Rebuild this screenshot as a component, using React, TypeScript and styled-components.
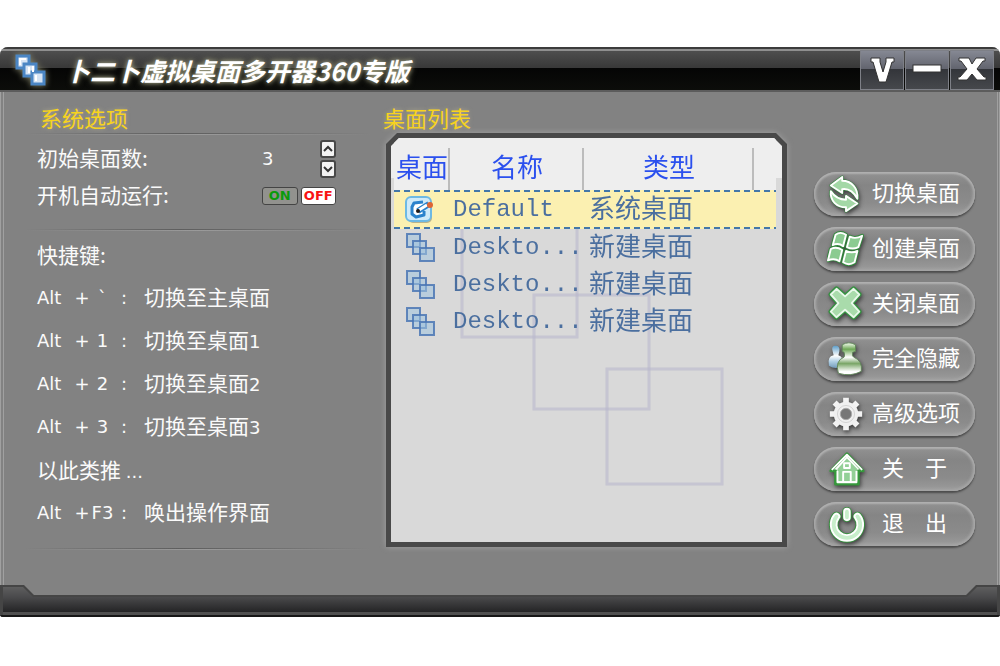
import React, { useState } from "react";
import styled, { createGlobalStyle, css } from "styled-components";

const cjk = `"Noto Sans CJK SC", sans-serif`;
const latin = `"DejaVu Sans", "Noto Sans CJK SC", sans-serif`;

const GlobalStyle = createGlobalStyle`
  * { box-sizing: border-box; }
  body { margin: 0; background: #fff; font-family: ${cjk}; }
  button, input { font: inherit; color: inherit; margin: 0; }
`;

const Page = styled.div`
  padding: 47px 0;
`;

const Window = styled.main`
  display: flex;
  flex-direction: column;
  min-width: 960px;
  background: #828282;
  border-radius: 8px 8px 3px 3px;
  overflow: hidden;
`;

const TitleBar = styled.header`
  display: flex;
  align-items: center;
  height: 45px;
  padding: 3px 6px 0 15px;
  border-bottom: 2px solid #5c5c5c;
  background: linear-gradient(#3c3c3c 0 2px, #8f8f8f 2px 4px, #4e4e4e 4px, #383838 21px, #050505 21px, #0c0d0a 100%);
`;

const AppIcon = styled.svg`
  width: 34px;
  height: 36px;
  flex: none;
  filter: drop-shadow(0 0 3px #8d8d70);
`;

const Title = styled.h1`
  flex: 1;
  margin: 0;
  padding-left: 16px;
  font-size: 25px;
  line-height: 38px;
  font-weight: 700;
  font-style: italic;
  color: #fff;
  white-space: nowrap;
  text-shadow: 0 0 4px #a5a58a, 0 0 7px #77775c;
`;

const Controls = styled.div`
  display: flex;
  gap: 1px;
`;

const ControlButton = styled.button`
  width: 44px;
  height: 40px;
  padding: 0;
  border: 1px solid #7e8087;
  background: linear-gradient(#858893, #62646e 18px, #33353a 18px, #46484c);
  svg { display: block; width: 42px; height: 38px; }
`;

const Body = styled.div`
  display: grid;
  grid-template-columns: 346px minmax(404px, 1fr) 161px;
  column-gap: 12px;
  padding: 13px 22px 35px 21px;
  border-left: 4px double #a0a0a0;
  border-right: 3px double #a0a0a0;
`;

const SectionTitle = styled.h2`
  margin: 0;
  padding-bottom: 4px;
  font-size: 22px;
  line-height: 24px;
  font-weight: 400;
  color: #f7d31e;
  text-shadow: 0 0 4px #aaa58c;
`;

const Options = styled.section`
  color: #fafafa;
  ${SectionTitle} { padding-left: 15px; }
`;

const Divider = styled.hr`
  height: 2px;
  margin: 0;
  border: 0;
  background:
    linear-gradient(90deg, transparent, #5e5e5e 45%, transparent) 0 0 / 100% 1px no-repeat,
    linear-gradient(90deg, transparent, #9a9a9a 50%, transparent) 0 1px / 100% 1px no-repeat;
`;

const Fields = styled.div`
  padding: 5px 35px 15px 12px;
`;

const Field = styled.div`
  display: flex;
  align-items: center;
  justify-content: space-between;
  height: 37px;
  font-size: 21px;
`;

const FieldLabel = styled.label`
  padding-bottom: 4px;
`;

const Stepper = styled.div`
  display: flex;
  justify-content: space-between;
  align-items: center;
  width: 74px;
`;

const CountInput = styled.input`
  width: 40px;
  padding: 0;
  border: 0;
  background: none;
  outline: none;
  font-family: ${latin};
  font-size: 18px;
`;

const Arrows = styled.div`
  display: grid;
  gap: 2px;
`;

const Arrow = styled.button`
  width: 16px;
  height: 18px;
  padding: 0;
  border: 2px solid #484848;
  border-radius: 3px;
  background: #f3f3f3;
  svg { display: block; width: 12px; height: 14px; }
`;

const Toggle = styled.div`
  display: flex;
  gap: 3px;
  width: 74px;
`;

const ToggleButton = styled.button<{ $on: boolean; $color: string }>`
  flex: 1;
  height: 18px;
  padding: 0;
  border: 1px solid #444;
  border-radius: 3px;
  background: ${(p) => (p.$on ? "#fff" : "#92928e")};
  color: ${(p) => p.$color};
  font-family: ${latin};
  font-size: 13px;
  line-height: 16px;
  font-weight: 700;
`;

const ShortcutTitle = styled.h3`
  margin: 0;
  padding: 4px 0 2px 12px;
  font-size: 21px;
  line-height: 39px;
  font-weight: 400;
`;

const Shortcuts = styled.ul`
  margin: 0;
  padding: 0 0 14px 12px;
  list-style: none;
`;

const Shortcut = styled.li`
  display: grid;
  grid-template-columns: 38px 14px 27px 16px auto;
  align-items: center;
  height: 43px;
  font-size: 21px;
  white-space: nowrap;
`;

const Target = styled.span`
  padding: 0 0 4px 12px;
`;

const Note = styled.li`
  height: 43px;
  font-size: 21px;
  line-height: 43px;
`;

const Latin = styled.span<{ $center?: boolean }>`
  font-family: ${latin};
  font-size: 18px;
  ${(p) => p.$center && css`
    display: flex;
    justify-content: center;
  `}
`;

const ListSection = styled.section`
  min-width: 0;
  margin-right: 15px;
`;

const Frame = styled.div`
  margin-left: 3px;
  filter: drop-shadow(0 0 3px #a2a2a2);
`;

const FrameEdge = styled.div`
  padding: 5px;
  background: #494949;
  clip-path: polygon(11px 0, calc(100% - 11px) 0, 100% 11px, 100% 100%, 0 100%, 0 11px);
`;

const ListBox = styled.div`
  position: relative;
  min-height: 404px;
  padding: 0 6px 0 3px;
  background: linear-gradient(#eee 40px, #d9d9d9 40px);
  clip-path: polygon(8px 0, calc(100% - 8px) 0, 100% 8px, 100% 100%, 0 100%, 0 8px);
`;

const Watermark = styled.svg`
  position: absolute;
  top: 82px;
  left: 69px;
  width: 266px;
  height: 268px;
`;

const Table = styled.table`
  position: relative;
  width: 100%;
  border-collapse: separate;
  border-spacing: 0;
  table-layout: fixed;
  color: #4b6f9f;
`;

const HeadCell = styled.th<{ $width?: number }>`
  width: ${(p) => (p.$width ? `${p.$width}px` : "auto")};
  height: 52px;
  padding: 3px 0 0;
  background: linear-gradient(#bcbcbc, #bcbcbc) right 10px / 2px 42px no-repeat #eee;
  color: #2b50ee;
  font-size: 26px;
  line-height: 36px;
  font-weight: 400;
`;

const HeadFill = styled.td`
  background: #eee;
`;

const Row = styled.tr<{ $selected: boolean }>`
  height: ${(p) => (p.$selected ? 39 : 37)}px;
  ${(p) =>
    p.$selected &&
    css`
      background:
        repeating-linear-gradient(90deg, #4377a9 0 6px, transparent 6px 10px) 0 0 / 100% 2px no-repeat,
        repeating-linear-gradient(90deg, #4377a9 0 6px, transparent 6px 10px) 0 100% / 100% 2px no-repeat,
        #fbf0b1;
    `}
`;

const IconCell = styled.td`
  padding: 0 0 0 10px;
  svg { display: block; width: 32px; height: 32px; }
`;

const NameCell = styled.td`
  padding: 0 0 0 3px;
  font-family: "Liberation Mono", monospace;
  font-size: 24px;
  line-height: 34px;
  white-space: nowrap;
`;

const TypeCell = styled.td`
  padding: 0 0 5px 5px;
  font-size: 26px;
  line-height: 32px;
  white-space: nowrap;
`;

const Actions = styled.nav`
  display: flex;
  flex-direction: column;
  gap: 11px;
  padding-top: 67px;
`;

const ActionLabel = styled.span<{ $spread?: boolean }>`
  display: flex;
  gap: 21px;
  padding: 0 0 6px ${(p) => (p.$spread ? 10 : 0)}px;
`;

const ActionButton = styled.button`
  display: flex;
  align-items: center;
  gap: 7px;
  height: 44px;
  padding: 0 0 0 13px;
  border: 0;
  border-radius: 22px;
  background: linear-gradient(#929292, #858585 30%, #8b8b8b 70%, #9c9c9c);
  box-shadow: inset 0 2px 2px #b0b0b0, inset 2px 0 3px #a5a5a5, inset -2px 0 3px #a5a5a5,
    inset 0 -2px 3px #a4a4a4, 0 2px 2px #4c4c4c;
  color: #fff;
  font-size: 22px;
  line-height: 36px;
  white-space: nowrap;
  svg { width: 38px; height: 38px; flex: none; filter: drop-shadow(1px 2px 2px #3c3c3c); }
`;

const Footer = styled.footer`
  height: 32px;
  background: #454545;
  border-bottom: 2px solid #161616;
  clip-path: polygon(0 0, 24px 0, 34px 10px, calc(100% - 34px) 10px, calc(100% - 24px) 0, 100% 0, 100% 100%, 0 100%);
  &::before {
    content: "";
    display: block;
    height: 30px;
    background: linear-gradient(#626262, #4a4a4c 12px, #242425 27px, #505050 27px);
    clip-path: polygon(3px 2px, 23px 2px, 33px 12px, calc(100% - 33px) 12px, calc(100% - 23px) 2px, calc(100% - 3px) 2px, calc(100% - 3px) 100%, 3px 100%);
  }
`;

const arrowPaths = [
  "M2 11 L14 2 V6 C24 6 31 14 30 25 C26 18 20 14 14 15 V19 Z",
  "M2 17 C6 23 11 26 18 26 V22 L30 30 L18 38 V34 C8 34 1 27 2 17 Z",
];

const panePaths = [
  "M9 5 Q14 1 20 5 L17 17 Q12 13 6 16 Z",
  "M24 7 Q30 10 37 6 L33 18 Q27 21 21 18 Z",
  "M4 20 Q10 17 16 21 L13 33 Q8 29 1 32 Z",
  "M20 22 Q26 25 32 22 L29 34 Q23 38 17 34 Z",
];

const crossPath = "M10 4 L19 12 L28 4 L34 10 L26 19 L34 28 L28 34 L19 26 L10 34 L4 28 L12 19 L4 10 Z";
const powerPath = "M9 12 A14 14 0 1 0 31 12 M20 7 V13";

const icons: Record<string, React.ReactNode> = {
  switch: (
    <g strokeLinejoin="round" transform="translate(2 0)">
      {arrowPaths.map((d) => (
        <g key={d}>
          <path d={d} fill="none" stroke="#33883d" strokeWidth="3" />
          <path d={d} fill="#a3d8a6" stroke="#fff" strokeWidth="2" />
        </g>
      ))}
    </g>
  ),
  create: (
    <g strokeLinejoin="round">
      {panePaths.map((d) => (
        <g key={d}>
          <path d={d} fill="none" stroke="#33883d" strokeWidth="4" />
          <path d={d} fill="#8bcb91" stroke="#fff" strokeWidth="2" />
        </g>
      ))}
    </g>
  ),
  close: (
    <g strokeLinejoin="round">
      <path d={crossPath} fill="none" stroke="#369141" strokeWidth="5" />
      <path d={crossPath} fill="#a9dbab" stroke="#e9f8ea" strokeWidth="2" />
    </g>
  ),
  hide: (
    <g>
      <path d="M2 27 Q0 17 7 16 L6 12 Q4 6 9 6 Q14 6 13 12 L12 16 Q18 18 17 27 Q9 32 2 27Z" fill="url(#pawnBlue)" />
      <path d="M12 35 Q8 22 18 18 Q19 16 18 13 L16 12 V5 Q23 1 30 5 V12 L27 13 Q26 17 28 18 Q38 22 36 33 Q25 39 12 35Z" fill="url(#pawnGreen)" stroke="#63885c" />
      <defs>
        <linearGradient id="pawnBlue" x2="0" y2="1"><stop offset="0" stopColor="#5d9dc8" /><stop offset=".45" stopColor="#fff" /><stop offset=".7" stopColor="#b1d0e5" /><stop offset="1" stopColor="#739bb9" /></linearGradient>
        <linearGradient id="pawnGreen" x2="0" y2="1"><stop offset="0" stopColor="#f7fff3" /><stop offset=".2" stopColor="#6ea856" /><stop offset=".45" stopColor="#fff" /><stop offset=".65" stopColor="#7aa667" /><stop offset=".9" stopColor="#fff" /></linearGradient>
      </defs>
    </g>
  ),
  settings: (
    <g>
      <g stroke="#f3f3f3" strokeWidth="6">
        {[0, 45, 90, 135].map((a) => <path key={a} d="M20 3 V10 M20 30 V37" transform={`rotate(${a} 20 20)`} />)}
      </g>
      <circle cx="20" cy="20" r="9" fill="none" stroke="#f0f0f0" strokeWidth="8" />
      <circle cx="20" cy="20" r="6" fill="#777" stroke="#aaa" />
      <circle cx="20" cy="20" r="9" fill="none" stroke="#d2d2d2" />
    </g>
  ),
  about: (
    <g strokeLinejoin="round" transform="translate(1 1)">
      <path d="M20 3 L37 21 H32 V35 H8 V21 H3 Z" fill="#fff" stroke="#36983c" strokeWidth="3" />
      <path d="M20 8 L31 19 V32 H10 V19 Z" fill="#93d097" />
      <path d="M4 20 L20 4 L36 20 M16 34 V22 H24 V34 M17 13 H23 V18 H17 Z M10 21 V33 H30 V21" fill="none" stroke="#fff" strokeWidth="2" />
    </g>
  ),
  exit: (
    <g fill="none" strokeLinecap="round" transform="translate(1 0)">
      <path d={powerPath} stroke="#38903f" strokeWidth="10" />
      <path d={powerPath} stroke="#fff" strokeWidth="8" />
      <path d={powerPath} stroke="#c8efcb" strokeWidth="4" />
    </g>
  ),
};

const actions: { icon: string; label: string; spread?: boolean }[] = [
  { icon: "switch", label: "切换桌面" },
  { icon: "create", label: "创建桌面" },
  { icon: "close", label: "关闭桌面" },
  { icon: "hide", label: "完全隐藏" },
  { icon: "settings", label: "高级选项" },
  { icon: "about", label: "关于", spread: true },
  { icon: "exit", label: "退出", spread: true },
];

const desktops = [
  { name: "Default", type: "系统桌面", system: true },
  { name: "Deskto...", type: "新建桌面", system: false },
  { name: "Deskto...", type: "新建桌面", system: false },
  { name: "Deskto...", type: "新建桌面", system: false },
];

const shortcuts = [
  { key: "`", target: "切换至主桌面", n: "" },
  { key: "1", target: "切换至桌面", n: "1" },
  { key: "2", target: "切换至桌面", n: "2" },
  { key: "3", target: "切换至桌面", n: "3" },
];

function SystemIcon() {
  return (
    <svg viewBox="0 0 32 32" aria-hidden="true">
      <rect x="4" y="5" width="24" height="24" rx="5" fill="#555" opacity=".4" />
      <rect x="2" y="3" width="25" height="24" rx="5" fill="#cfeaf9" stroke="#6db9e4" strokeWidth="2" />
      <path d="M19 8 L10 9 L8 13 V20 L12 23 L20 21 V17" fill="#fff" stroke="#2a82cc" strokeWidth="3" strokeLinejoin="round" />
      <path d="M14 17 L25 10" fill="none" stroke="#2a82cc" strokeWidth="6" />
      <path d="M15 16 L23 11" stroke="#fff" strokeWidth="3" />
      <circle cx="14" cy="17" r="2" fill="#211b18" />
      <circle cx="26" cy="11" r="3" fill="#dd6534" />
    </svg>
  );
}

function DesktopIcon() {
  return (
    <svg viewBox="0 0 32 32" aria-hidden="true">
      <g fill="#9ec2df" fillOpacity=".55" stroke="#4a76b4" strokeOpacity=".85" strokeWidth="2">
        <rect x="3" y="2" width="13" height="13" />
        <rect x="9" y="9" width="13" height="13" />
        <rect x="16" y="16" width="14" height="13" />
      </g>
    </svg>
  );
}

function ShortcutRow({ combo, target, n }: { combo: string; target: string; n?: string }) {
  return (
    <Shortcut>
      <Latin>Alt</Latin>
      <Latin $center>+</Latin>
      <Latin $center>{combo}</Latin>
      <Latin $center>:</Latin>
      <Target>{target}{n && <Latin>{n}</Latin>}</Target>
    </Shortcut>
  );
}

export default function App() {
  const [count, setCount] = useState(3);
  const [autoRun, setAutoRun] = useState(false);
  const [selected, setSelected] = useState(0);

  return (
    <Page>
      <GlobalStyle />
      <Window>
        <TitleBar>
          <AppIcon viewBox="0 0 34 36" aria-hidden="true">
            <g stroke="#4b86c4" strokeWidth="3" fill="#d5e3f3">
              <rect x="2" y="4" width="12" height="12" />
              <rect x="9" y="12" width="12" height="12" />
              <rect x="17" y="20" width="12" height="12" />
            </g>
            <path d="M5 13 V7 H11 M14 15 V21 M18 14 V20 M21 29 V23" stroke="#fff" strokeWidth="2" fill="none" />
          </AppIcon>
          <Title>卜二卜虚拟桌面多开器360专版</Title>
          <Controls>
            <ControlButton aria-label="菜单">
              <svg viewBox="0 0 42 38"><path d="M10 7 H19 V11 L22 21 L25 11 V7 H33 V11 H31 L25 31 H18 L12 11 H10 Z" fill="#fff" stroke="#333" /></svg>
            </ControlButton>
            <ControlButton aria-label="最小化">
              <svg viewBox="0 0 42 38"><rect x="7" y="14" width="28" height="7" fill="#fff" stroke="#333" /></svg>
            </ControlButton>
            <ControlButton aria-label="关闭">
              <svg viewBox="0 0 42 38"><path d="M8 7 H18 L21 13 L25 7 H34 V10 H32 L26 18 L33 26 H35 V29 H26 L21 23 L16 29 H7 V26 H9 L16 18 L10 10 H8 Z" fill="#fff" stroke="#333" /></svg>
            </ControlButton>
          </Controls>
        </TitleBar>

        <Body>
          <Options>
            <SectionTitle>系统选项</SectionTitle>
            <Divider />
            <Fields>
              <Field>
                <FieldLabel htmlFor="count">初始桌面数:</FieldLabel>
                <Stepper>
                  <CountInput id="count" value={count} onChange={(e) => setCount(Number(e.target.value) || 0)} />
                  <Arrows>
                    <Arrow aria-label="增加" onClick={() => setCount(count + 1)}>
                      <svg viewBox="0 0 12 14"><path d="M2 9 L6 5 L10 9" fill="none" stroke="#333" strokeWidth="2" /></svg>
                    </Arrow>
                    <Arrow aria-label="减少" onClick={() => setCount(Math.max(0, count - 1))}>
                      <svg viewBox="0 0 12 14"><path d="M2 5 L6 9 L10 5" fill="none" stroke="#333" strokeWidth="2" /></svg>
                    </Arrow>
                  </Arrows>
                </Stepper>
              </Field>
              <Field>
                <FieldLabel as="span" id="autorun">开机自动运行:</FieldLabel>
                <Toggle role="group" aria-labelledby="autorun">
                  <ToggleButton $on={autoRun} $color="#0a9a0a" aria-pressed={autoRun} onClick={() => setAutoRun(true)}>ON</ToggleButton>
                  <ToggleButton $on={!autoRun} $color="#f81414" aria-pressed={!autoRun} onClick={() => setAutoRun(false)}>OFF</ToggleButton>
                </Toggle>
              </Field>
            </Fields>
            <Divider />
            <ShortcutTitle>快捷键:</ShortcutTitle>
            <Shortcuts>
              {shortcuts.map((s) => (
                <ShortcutRow key={s.key} combo={s.key} target={s.target} n={s.n} />
              ))}
              <Note>以此类推 <Latin>...</Latin></Note>
              <ShortcutRow combo="F3" target="唤出操作界面" />
            </Shortcuts>
            <Divider />
          </Options>

          <ListSection>
            <SectionTitle>桌面列表</SectionTitle>
            <Frame>
              <FrameEdge>
                <ListBox>
                  <Watermark viewBox="0 0 266 268" aria-hidden="true">
                    <g fill="none" stroke="#b9b7cd" strokeOpacity=".6" strokeWidth="3">
                      <rect x="2" y="2" width="115" height="115" />
                      <rect x="74" y="75" width="115" height="114" />
                      <rect x="147" y="149" width="115" height="115" />
                    </g>
                  </Watermark>
                  <Table>
                    <thead>
                      <tr>
                        <HeadCell $width={56}>桌面</HeadCell>
                        <HeadCell $width={134}>名称</HeadCell>
                        <HeadCell $width={170}>类型</HeadCell>
                        <HeadFill />
                      </tr>
                    </thead>
                    <tbody>
                      {desktops.map((d, i) => (
                        <Row key={i} $selected={i === selected} onClick={() => setSelected(i)}>
                          <IconCell>{d.system ? <SystemIcon /> : <DesktopIcon />}</IconCell>
                          <NameCell>{d.name}</NameCell>
                          <TypeCell colSpan={2}>{d.type}</TypeCell>
                        </Row>
                      ))}
                    </tbody>
                  </Table>
                </ListBox>
              </FrameEdge>
            </Frame>
          </ListSection>

          <Actions>
            {actions.map((a) => (
              <ActionButton key={a.icon} aria-label={a.label}>
                <svg viewBox="0 0 40 40" aria-hidden="true">{icons[a.icon]}</svg>
                <ActionLabel $spread={a.spread}>
                  {a.spread ? [...a.label].map((c) => <span key={c}>{c}</span>) : a.label}
                </ActionLabel>
              </ActionButton>
            ))}
          </Actions>
        </Body>
        <Footer />
      </Window>
    </Page>
  );
}
